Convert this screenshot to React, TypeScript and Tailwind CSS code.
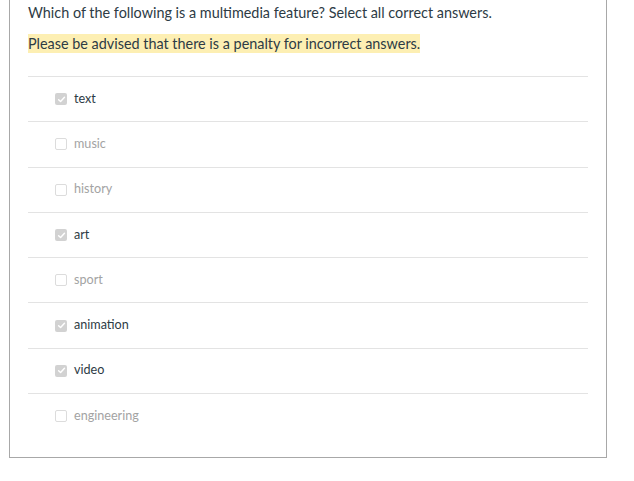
import React from "react";

const options = [
  { label: "text", checked: true },
  { label: "music", checked: false },
  { label: "history", checked: false },
  { label: "art", checked: true },
  { label: "sport", checked: false },
  { label: "animation", checked: true },
  { label: "video", checked: true },
  { label: "engineering", checked: false },
];

function Box({ checked }: { checked: boolean }) {
  if (checked) {
    return (
      <span className="flex h-[12px] w-[12px] items-center justify-center rounded-[2px] bg-[#d2d2d2]">
        <svg width="9" height="9" viewBox="0 0 10 10" fill="none">
          <path d="M1.8 5.2 L4 7.3 L8.3 2.6" stroke="#fff" strokeWidth="1.6" strokeLinecap="round" strokeLinejoin="round" />
        </svg>
      </span>
    );
  }
  return <span className="h-[12px] w-[12px] rounded-[2px] border border-[#dcdcdc] bg-white" />;
}

export default function App() {
  return (
    <div className="min-h-screen bg-white pl-[9px] pr-[27px] font-['Lato','Liberation_Sans',sans-serif]">
      <div className="border-x border-b border-[#a8a8a8] px-[18px] pb-[19px]">
        <p className="pt-[3px] text-[14.4px] leading-[20px] text-[#2d3b45]">
          Which of the following is a multimedia feature? Select all correct answers.
        </p>
        <p className="mt-[11px] text-[14.4px] leading-[20px] text-[#2d3b45]">
          <span className="bg-[#fdefb3] py-[1px]">Please be advised that there is a penalty for incorrect answers.</span>
        </p>
        <div className="mt-[22px]">
          {options.map((o) => (
            <div key={o.label} className="flex h-[45.3px] items-center gap-[7px] border-t border-[#e3e3e3] pl-[27px]">
              <Box checked={o.checked} />
              <span className={`text-[12.6px] ${o.checked ? "text-[#2d3b45]" : "text-[#a3a3a3]"}`}>{o.label}</span>
            </div>
          ))}
        </div>
      </div>
    </div>
  );
}
